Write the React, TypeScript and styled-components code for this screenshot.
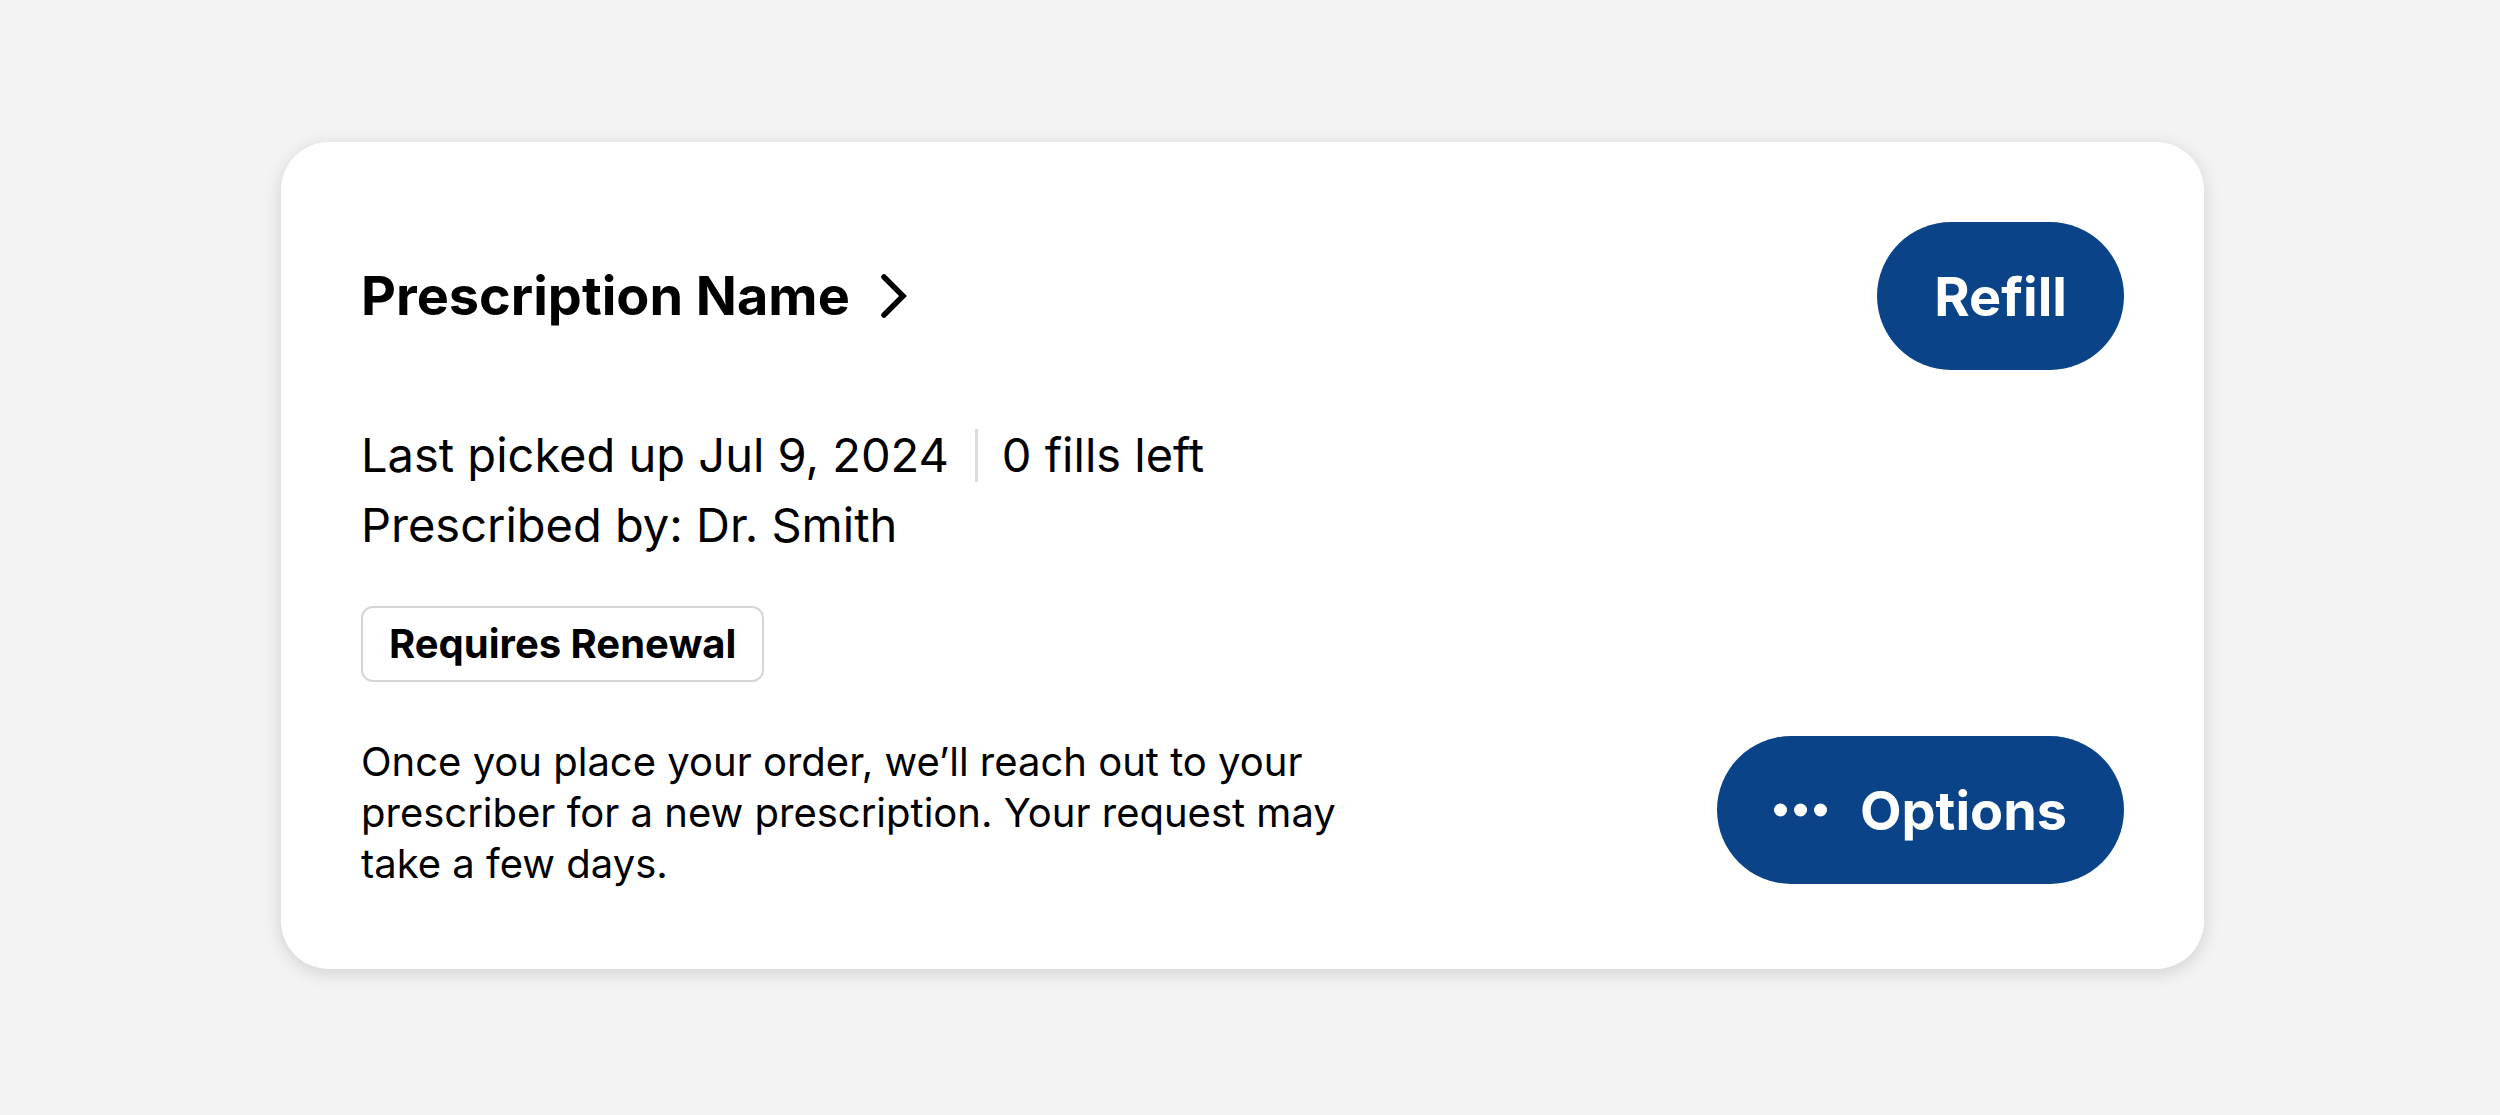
import styled, { createGlobalStyle } from 'styled-components';

const GlobalStyle = createGlobalStyle`
  html, body {
    margin: 0;
    padding: 0;
    background: #f3f3f3;
    font-family: Inter, "Noto Sans", "Liberation Sans", sans-serif;
    color: #000;
  }
`;

const Page = styled.div`
  min-height: 1115px;
  box-sizing: border-box;
  padding: 142px 0 0 281px;
`;

const Card = styled.div`
  width: 1923px;
  box-sizing: border-box;
  padding: 80px;
  background: #fff;
  border-radius: 48px;
  box-shadow: 0 4px 18px rgba(0, 0, 0, 0.14);
`;

const Row = styled.div<{ $align?: string }>`
  display: flex;
  justify-content: space-between;
  align-items: ${(p) => p.$align || 'center'};
`;

const TitleLink = styled.a`
  display: flex;
  align-items: center;
  gap: 27px;
  color: #000;
  text-decoration: none;
  cursor: pointer;
`;

const Title = styled.h2`
  margin: 0;
  font-size: 54px;
  font-weight: 700;
  line-height: 68px;
`;

const PillButton = styled.button`
  display: flex;
  align-items: center;
  gap: 32px;
  height: 148px;
  padding: 0 57px;
  border: none;
  border-radius: 74px;
  background: #0b4389;
  color: #fff;
  font-family: inherit;
  font-size: 54px;
  font-weight: 700;
  cursor: pointer;
`;

const Info = styled.div`
  margin-top: 50px;
  font-size: 47px;
  line-height: 70px;
`;

const InfoLine = styled.div`
  display: flex;
  align-items: center;
`;

const Divider = styled.span`
  width: 3px;
  height: 53px;
  margin: 0 24px 0 26px;
  background: #dcdcdc;
`;

const Badge = styled.div`
  display: inline-block;
  margin-top: 46px;
  padding: 0 26px;
  border: 2px solid #d5d5d2;
  border-radius: 12px;
  font-size: 40px;
  font-weight: 700;
  line-height: 72px;
`;

const Note = styled.p`
  margin: 0;
  max-width: 1010px;
  font-size: 40px;
  line-height: 51px;
`;

const BottomRow = styled(Row)`
  margin-top: 54px;
`;

function Chevron() {
  return (
    <svg width="30" height="48" viewBox="0 0 30 48" fill="none">
      <path d="M7 5 L26 24 L7 43" stroke="#000" strokeWidth="5.5" strokeLinecap="round" />
    </svg>
  );
}

function Dots() {
  return (
    <svg width="54" height="14" viewBox="0 0 54 14" fill="#fff">
      <circle cx="6.5" cy="7" r="6.5" />
      <circle cx="26.5" cy="7" r="6.5" />
      <circle cx="46.5" cy="7" r="6.5" />
    </svg>
  );
}

export default function App() {
  return (
    <Page>
      <GlobalStyle />
      <Card>
        <Row>
          <TitleLink>
            <Title>Prescription Name</Title>
            <Chevron />
          </TitleLink>
          <PillButton>Refill</PillButton>
        </Row>

        <Info>
          <InfoLine>
            Last picked up Jul 9, 2024
            <Divider />
            0 fills left
          </InfoLine>
          <InfoLine>Prescribed by: Dr. Smith</InfoLine>
        </Info>

        <Badge>Requires Renewal</Badge>

        <BottomRow $align="flex-start">
          <Note>
            Once you place your order, we’ll reach out to your prescriber for a new prescription. Your
            request may take a few days.
          </Note>
          <PillButton>
            <Dots />
            Options
          </PillButton>
        </BottomRow>
      </Card>
    </Page>
  );
}
